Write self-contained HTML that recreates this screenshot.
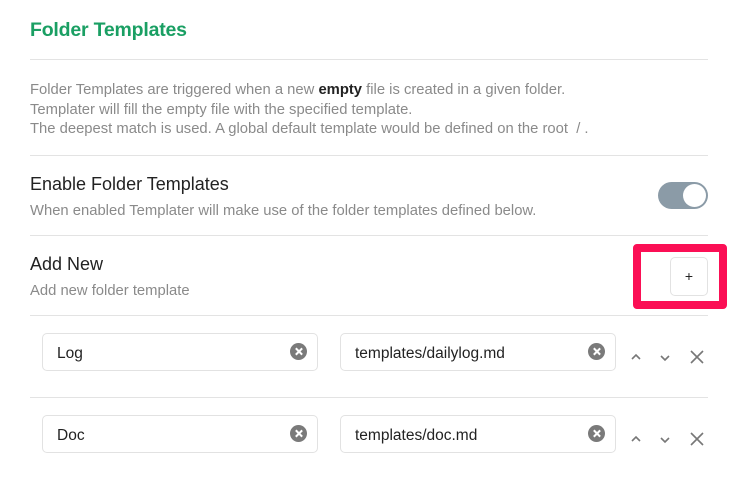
<!DOCTYPE html>
<html><head><style>
*{margin:0;padding:0;box-sizing:border-box}
body{width:739px;height:479px;background:#fff;font-family:"Liberation Sans",sans-serif;position:relative;overflow:hidden}
.a{position:absolute;white-space:nowrap}
.hr{position:absolute;left:30px;width:678px;height:1px;background:#e3e3e3}
.d{color:#8a8a8a;font-size:14.8px}
.inp{position:absolute;height:38px;border:1px solid #e2e2e2;border-radius:5px;font-size:15.5px;color:#222;padding:11px 0 0 14px}
.clr{position:absolute;right:10px;top:9px;width:17px;height:17px;border-radius:50%;background:#7a7a7a}
.clr:before,.clr:after{content:"";position:absolute;left:8px;top:4px;width:1.8px;height:9px;background:#fff;transform:rotate(45deg)}
.clr:after{transform:rotate(-45deg)}
</style></head><body>
<div class="a" style="left:30px;top:19px;font-size:19.5px;color:#1a9f63;font-weight:bold;letter-spacing:-0.2px">Folder Templates</div>
<div class="hr" style="top:59px"></div>
<div class="a d" style="left:30px;top:81px;line-height:19.5px">Folder Templates are triggered when a new <b style="color:#222">empty</b> file is created in a given folder.<br>Templater will fill the empty file with the specified template.<br>The deepest match is used. A global default template would be defined on the root &nbsp;/ .</div>
<div class="hr" style="top:155px"></div>
<div class="a" style="left:30px;top:174px;font-size:18px;color:#222">Enable Folder Templates</div>
<div class="a d" style="left:30px;top:203px">When enabled Templater will make use of the folder templates defined below.</div>
<div class="a" style="left:658px;top:182px;width:50px;height:27px;border-radius:14px;background:#8b9ba7"><div style="position:absolute;right:2px;top:2px;width:23px;height:23px;border-radius:50%;background:#fff"></div></div>
<div class="hr" style="top:235px"></div>
<div class="a" style="left:30px;top:254px;font-size:18px;color:#222">Add New</div>
<div class="a d" style="left:30px;top:283px">Add new folder template</div>
<div class="a" style="left:633px;top:244px;width:94px;height:65px;border:8px solid #fb0f55;border-radius:4px"></div>
<div class="a" style="left:670px;top:257px;width:38px;height:39px;border:1px solid #e2e2e2;border-radius:5px;text-align:center;line-height:37px;font-size:14px;color:#222">+</div>
<div class="hr" style="top:315px"></div>
<div class="hr" style="top:397px"></div>

<div class="inp" style="left:42px;top:333px;width:276px">Log<div class="clr"></div></div>
<div class="inp" style="left:340px;top:333px;width:276px">templates/dailylog.md<div class="clr"></div></div>
<div class="inp" style="left:42px;top:415px;width:276px">Doc<div class="clr"></div></div>
<div class="inp" style="left:340px;top:415px;width:276px">templates/doc.md<div class="clr"></div></div>

<svg class="a" style="left:625px;top:342px" width="90" height="110" fill="none" stroke="#777" stroke-width="1.6">
<path d="M7 17 L11 13 L15 17"/><path d="M36 14 L40 18 L44 14"/><path d="M66 9 L78 21 M78 9 L66 21"/>
<path d="M7 99 L11 95 L15 99"/><path d="M36 96 L40 100 L44 96"/><path d="M66 91 L78 103 M78 91 L66 103"/>
</svg>
</body></html>
